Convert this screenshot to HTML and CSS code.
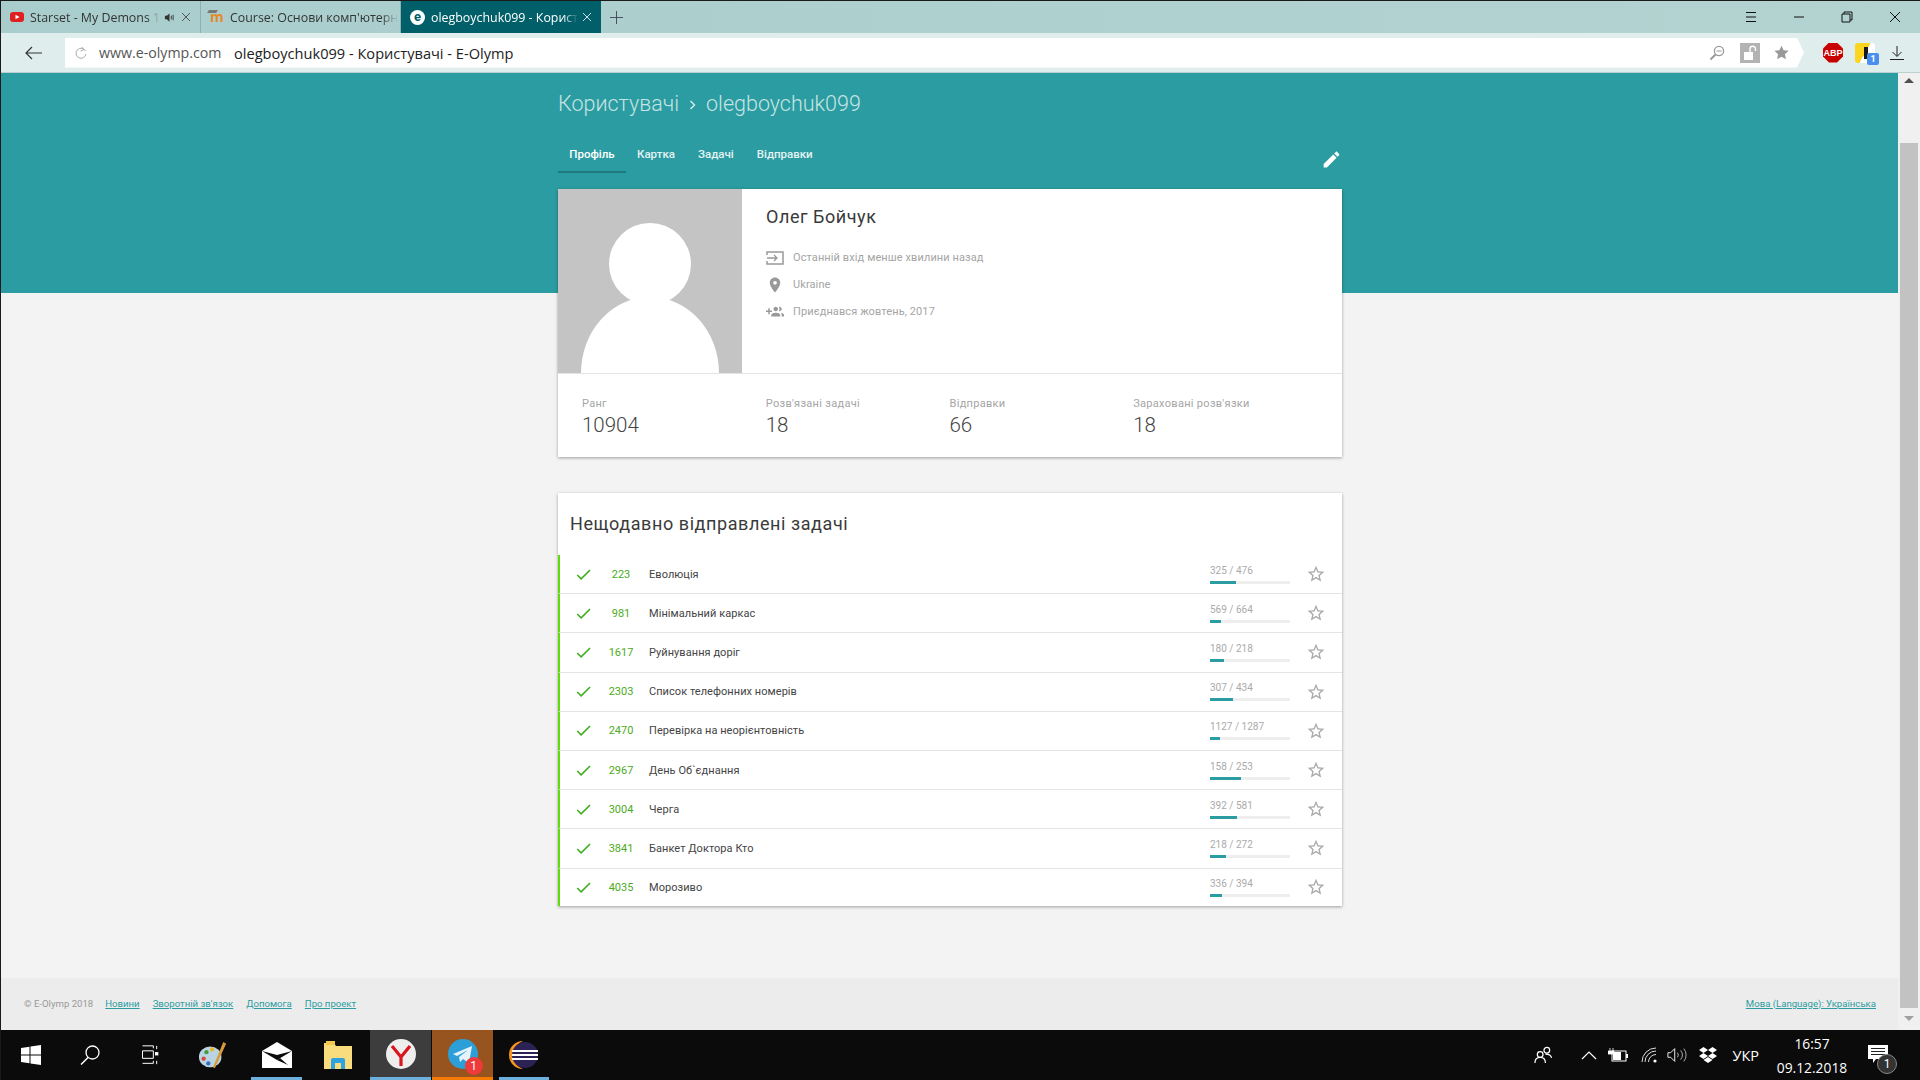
FILE: index.html
```html
<!DOCTYPE html>
<html lang="uk">
<head>
<meta charset="utf-8">
<title>olegboychuk099 - Користувачі - E-Olymp</title>
<link rel="stylesheet" href="styles.css">
</head>
<body>
<svg class="defs" width="0" height="0" aria-hidden="true">
  <symbol id="i-check" viewBox="0 0 24 24"><path d="M9 16.17L4.83 12l-1.42 1.41L9 19 21 7l-1.41-1.41z"/></symbol>
  <symbol id="i-star" viewBox="0 0 24 24"><path d="M22 9.24l-7.19-.62L12 2 9.19 8.63 2 9.24l5.46 4.73L5.82 21 12 17.27 18.18 21l-1.63-7.03L22 9.24zM12 15.4l-3.76 2.27 1-4.28-3.32-2.88 4.38-.38L12 6.1l1.71 4.04 4.38.38-3.32 2.88 1 4.28L12 15.4z"/></symbol>
</svg>
<div class="shell">
  <div class="tabbar">
    <div class="tab">
      <svg class="fav" viewBox="0 0 14 14"><rect y="2" width="14" height="10" rx="3" fill="#e02020"/><path d="M5.5 4.7v4.6L9.5 7z" fill="#fff"/></svg>
      <span class="tab-title tab-title-1">Starset - My Demons 1</span>
      <svg class="speaker" viewBox="0 0 12 12"><path d="M1 4h2l3-2.5v9L3 8H1z" fill="#333"/><path d="M8 4v4M10 3v6" stroke="#333"/></svg>
      <svg class="tab-x" viewBox="0 0 10 10"><path d="M1 1l8 8M9 1l-8 8" stroke="#555"/></svg>
    </div>
    <div class="tab">
      <span class="fav-m">m</span>
      <span class="tab-title">Course: Основи комп'ютерн</span>
    </div>
    <div class="tab tab-active">
      <span class="fav-e">e</span>
      <span class="tab-title">olegboychuk099 - Корист</span>
      <svg class="tab-x" viewBox="0 0 10 10"><path d="M1 1l8 8M9 1l-8 8" stroke="#cde"/></svg>
    </div>
    <svg class="plus" viewBox="0 0 14 14"><path d="M7 0v14M0 7h14" stroke="#445"/></svg>
    <div class="win-ctrls">
      <svg viewBox="0 0 12 12"><path d="M1 1.5h10M1 6h10M1 10.5h10" stroke="#111"/></svg>
      <svg viewBox="0 0 12 12"><path d="M1 6h10" stroke="#111"/></svg>
      <svg viewBox="0 0 12 12"><path d="M3 3V1h8v8H9M1 3h8v8H1z" fill="none" stroke="#111"/></svg>
      <svg viewBox="0 0 12 12"><path d="M1 1l10 10M11 1L1 11" stroke="#111"/></svg>
    </div>
  </div>
  <div class="addrbar">
    <svg class="back" viewBox="0 0 18 14"><path d="M1 7h16M7 1L1 7l6 6" fill="none" stroke="#333" stroke-width="1.2"/></svg>
    <div class="omnibox">
      <svg class="reload" viewBox="0 0 14 14"><path d="M11.5 5A5 5 0 1 0 12 8M8 1l1.5 3L6.5 5" fill="none" stroke="#aaa"/></svg>
      <span class="domain">www.e-olymp.com</span>
      <span class="page-title">olegboychuk099 - Користувачі - E-Olymp</span>
      <svg class="omni-search" viewBox="0 0 16 16"><circle cx="10" cy="6" r="4.6" fill="none" stroke="#999" stroke-width="1.3"/><path d="M7.5 6h5" stroke="#999"/><path d="M6.5 9.5L1.5 14.5" stroke="#999" stroke-width="2"/></svg>
      <span class="omni-lock"><svg viewBox="0 0 20 20"><rect x="4" y="9" width="9" height="8" fill="#fff"/><path d="M10 9V6a2.500 2.500 0 0 1 5.500 0v2" fill="none" stroke="#fff" stroke-width="1.400"/></svg></span>
      <svg class="omni-star" viewBox="0 0 24 24"><path d="M12 1l3.400 7.400 8 .9-5.900 5.500 1.600 8L12 18.800 4.900 22.800l1.600-8L.6 9.300l8-.9z" fill="#999"/></svg>
    </div>
    <div class="ext-abp"><span>ABP</span></div>
    <div class="ext-y"><span class="ext-badge">1</span></div>
    <svg class="dl" viewBox="0 0 14 14"><path d="M7 0v10M2.500 6L7 10.500 11.500 6M0 13.500h14" fill="none" stroke="#222"/></svg>
  </div>

  <div class="viewport">
    <div class="page">
      <div class="hero">
        <div class="wrap">
          <h1 class="crumbs"><span>Користувачі</span><svg class="crumb-sep" viewBox="0 0 8 12"><path d="M1.500 2l4 4-4 4" fill="none" stroke="#cfe9e8" stroke-width="1.500"/></svg><span>olegboychuk099</span></h1>
          <div class="tabs">
            <a class="ptab ptab-active">Профіль</a>
            <a class="ptab">Картка</a>
            <a class="ptab">Задачі</a>
            <a class="ptab">Відправки</a>
            <svg class="edit" viewBox="0 0 24 24"><path d="M3 17.250V21h3.750L17.810 9.940l-3.750-3.750L3 17.250zM20.710 7.040c.39-.39.39-1.020 0-1.410l-2.340-2.340c-.39-.39-1.020-.39-1.410 0l-1.830 1.830 3.750 3.750 1.830-1.830z"/></svg>
          </div>
        </div>
      </div>
      <main class="content wrap">
        <section class="card">
          <div class="profile">
            <svg class="avatar" viewBox="0 0 184 184"><rect width="184" height="184" fill="#c4c4c4"/><ellipse cx="92" cy="184" rx="69" ry="76" fill="#fff"/><circle cx="92" cy="75" r="41" fill="#fff"/></svg>
            <div class="about">
              <h2 class="name">Олег Бойчук</h2>
              <div class="info"><svg class="info-i" viewBox="0 0 18 14"><path d="M1 4V1h16v12H1v-3" fill="none" stroke="#999" stroke-width="1.500"/><path d="M1 7h10M8 4l3 3-3 3" fill="none" stroke="#999" stroke-width="1.300"/></svg><span>Останній вхід менше хвилини назад</span></div>
              <div class="info"><svg class="info-i" viewBox="0 0 24 24"><path d="M12 2C8.130 2 5 5.130 5 9c0 5.250 7 13 7 13s7-7.750 7-13c0-3.870-3.130-7-7-7zm0 9.500c-1.380 0-2.500-1.120-2.500-2.500s1.120-2.500 2.500-2.500 2.500 1.120 2.500 2.500-1.120 2.500-2.500 2.500z" fill="#999"/></svg><span>Ukraine</span></div>
              <div class="info"><svg class="info-i" viewBox="0 0 24 24"><path d="M8 10H5V7H3v3H0v2h3v3h2v-3h3v-2zm10 1c1.660 0 2.990-1.340 2.990-3S19.660 5 18 5c-.32 0-.63.05-.91.14.57.81.9 1.790.9 2.860s-.34 2.040-.9 2.860c.28.09.59.14.91.14zm-5 0c1.660 0 2.990-1.340 2.990-3S14.660 5 13 5s-3 1.340-3 3 1.340 3 3 3zm6.620 2.160c.83.73 1.380 1.660 1.380 2.840v2h3v-2c0-1.540-2.370-2.490-4.380-2.840zM13 13c-2 0-6 1-6 3v2h12v-2c0-2-4-3-6-3z" fill="#999"/></svg><span>Приєднався жовтень, 2017</span></div>
            </div>
          </div>
          <div class="stats">
            <div class="stat"><div class="stat-label">Ранг</div><div class="stat-value">10904</div></div>
            <div class="stat"><div class="stat-label">Розв'язані задачі</div><div class="stat-value">18</div></div>
            <div class="stat"><div class="stat-label">Відправки</div><div class="stat-value">66</div></div>
            <div class="stat"><div class="stat-label">Зараховані розв'язки</div><div class="stat-value">18</div></div>
          </div>
        </section>

        <section class="card card-recent">
          <h2 class="recent-title">Нещодавно відправлені задачі</h2>
          <div class="row"><svg class="check"><use href="#i-check"/></svg><span class="num">223</span><span class="pname">Еволюція</span><div class="meter"><span class="count">325 / 476</span><div class="bar"><div class="fill" style="width:26px"></div></div></div><svg class="star"><use href="#i-star"/></svg></div>
          <div class="row"><svg class="check"><use href="#i-check"/></svg><span class="num">981</span><span class="pname">Мінімальний каркас</span><div class="meter"><span class="count">569 / 664</span><div class="bar"><div class="fill" style="width:11px"></div></div></div><svg class="star"><use href="#i-star"/></svg></div>
          <div class="row"><svg class="check"><use href="#i-check"/></svg><span class="num">1617</span><span class="pname">Руйнування доріг</span><div class="meter"><span class="count">180 / 218</span><div class="bar"><div class="fill" style="width:14px"></div></div></div><svg class="star"><use href="#i-star"/></svg></div>
          <div class="row"><svg class="check"><use href="#i-check"/></svg><span class="num">2303</span><span class="pname">Список телефонних номерів</span><div class="meter"><span class="count">307 / 434</span><div class="bar"><div class="fill" style="width:23px"></div></div></div><svg class="star"><use href="#i-star"/></svg></div>
          <div class="row"><svg class="check"><use href="#i-check"/></svg><span class="num">2470</span><span class="pname">Перевірка на неорієнтовність</span><div class="meter"><span class="count">1127 / 1287</span><div class="bar"><div class="fill" style="width:10px"></div></div></div><svg class="star"><use href="#i-star"/></svg></div>
          <div class="row"><svg class="check"><use href="#i-check"/></svg><span class="num">2967</span><span class="pname">День Об`єднання</span><div class="meter"><span class="count">158 / 253</span><div class="bar"><div class="fill" style="width:31px"></div></div></div><svg class="star"><use href="#i-star"/></svg></div>
          <div class="row"><svg class="check"><use href="#i-check"/></svg><span class="num">3004</span><span class="pname">Черга</span><div class="meter"><span class="count">392 / 581</span><div class="bar"><div class="fill" style="width:27px"></div></div></div><svg class="star"><use href="#i-star"/></svg></div>
          <div class="row"><svg class="check"><use href="#i-check"/></svg><span class="num">3841</span><span class="pname">Банкет Доктора Кто</span><div class="meter"><span class="count">218 / 272</span><div class="bar"><div class="fill" style="width:16px"></div></div></div><svg class="star"><use href="#i-star"/></svg></div>
          <div class="row"><svg class="check"><use href="#i-check"/></svg><span class="num">4035</span><span class="pname">Морозиво</span><div class="meter"><span class="count">336 / 394</span><div class="bar"><div class="fill" style="width:12px"></div></div></div><svg class="star"><use href="#i-star"/></svg></div>
        </section>
      </main>
      <footer class="footer">
        <span class="copy">© E-Olymp 2018</span>
        <a class="flink">Новини</a>
        <a class="flink">Зворотній зв'язок</a>
        <a class="flink">Допомога</a>
        <a class="flink">Про проект</a>
        <a class="flink flink-lang">Мова (Language): Українська</a>
      </footer>
    </div>
    <div class="scrollbar">
      <span class="sb-up"></span>
      <span class="sb-thumb"></span>
      <span class="sb-down"></span>
    </div>
  </div>

  <div class="taskbar">
    <div class="slot slot-win"><svg class="ti" viewBox="0 0 20 20"><path d="M0 3l8.500-1.200v7.600H0zM9.500 1.600L20 0v9.400H9.500zM0 10.400h8.500v7.800L0 17zM9.500 10.400H20V20L9.500 18.400z" fill="#fff"/></svg></div>
    <div class="slot"><svg class="ti" viewBox="0 0 20 20"><circle cx="12.500" cy="7.500" r="6.500" fill="none" stroke="#fff" stroke-width="1.300"/><path d="M8 12.500L1 19.500" stroke="#fff" stroke-width="1.500"/></svg></div>
    <div class="slot"><svg class="ti" viewBox="0 0 20 24"><path d="M1 1h13M1 7h13v9H1zM1 22h13M14 1v3M1 19v0M14 19v3M18 1v4M18 19v4" fill="none" stroke="#fff" stroke-width="1.200"/><rect x="16" y="8.500" width="4" height="4" fill="#fff"/></svg></div>
    <div class="slot slot-paint"><svg class="ti-l" viewBox="0 0 32 32"><ellipse cx="13" cy="18" rx="12" ry="11" fill="#b9d5e4"/><circle cx="9" cy="13" r="2.300" fill="#4a9a3a"/><circle cx="15" cy="10" r="2.300" fill="#e8b62a"/><circle cx="6" cy="20" r="2.300" fill="#d84a3a"/><circle cx="11" cy="25" r="2.300" fill="#3a6ec0"/><path d="M27 2l3 2-12 26-2-1z" fill="#d99a3a"/></svg></div>
    <div class="slot slot-app slot-mail"><svg class="ti-l" viewBox="0 0 30 26"><path d="M0 9L15 0l15 9v17H0z" fill="#fff"/><path d="M0 9l15 9 15-9-15 4z" fill="#0a0a0a"/><path d="M15 18l11 5-8-7z" fill="#0a0a0a"/></svg></div>
    <div class="slot"><svg class="ti-l" viewBox="0 0 30 28"><path d="M1 2h10l2 3h16v23H1z" fill="#f9dc7e"/><rect x="3" y="0" width="9" height="4" fill="#f2c94c"/><path d="M8 28v-9a2 2 0 0 1 2-2h10a2 2 0 0 1 2 2v9h-4v-6h-6v6z" fill="#2ea3dd"/></svg></div>
    <div class="slot slot-ya"><svg class="ti-xl" viewBox="0 0 30 30"><circle cx="15" cy="15" r="15" fill="#eee"/><path d="M6 7l9 11v9M24 7l-9 11" fill="none" stroke="#d9161c" stroke-width="3.200"/></svg></div>
    <div class="slot slot-tg"><span class="tg-wrap"><svg class="ti-xl" viewBox="0 0 30 30"><circle cx="15" cy="15" r="15" fill="#2c9fd8"/><path d="M5 15l19-8-3 17-6-4-3 3-1-5 9-7-11 6z" fill="#e6f3fa"/></svg><span class="tg-badge">1</span></span></div>
    <div class="slot slot-app"><svg class="ti-l" viewBox="0 0 30 30"><path d="M14 1A14 14 0 0 0 14 29 15 15 0 0 1 14 1z" fill="#f7941e"/><circle cx="16" cy="15" r="13" fill="#2c2255"/><path d="M3 11h26M3 15h26M3 19h26" stroke="#fff" stroke-width="1.800"/></svg></div>
    <div class="tray">
      <svg class="tr tr-people" viewBox="0 0 20 20"><circle cx="13.500" cy="4.500" r="3" fill="none" stroke="#fff" stroke-width="1.300"/><circle cx="6.500" cy="9" r="3" fill="none" stroke="#fff" stroke-width="1.300"/><path d="M1 18c0-4 2-6 5.500-6s5.500 2 5.500 6M12 8.500c4 0 6 1.500 6.500 4" fill="none" stroke="#fff" stroke-width="1.300"/></svg>
      <svg class="tr tr-chev" viewBox="0 0 16 10"><path d="M1 9l7-7 7 7" fill="none" stroke="#fff" stroke-width="1.200"/></svg>
      <svg class="tr tr-batt" viewBox="0 0 20 14"><rect x="4" y="3" width="14" height="10" fill="none" stroke="#fff"/><rect x="5" y="4" width="8" height="8" fill="#fff"/><rect x="18" y="6" width="2" height="4" fill="#fff"/><path d="M2 0v3M5 0v3M0 3h6v3H0z" stroke="#fff" fill="#fff" stroke-width=".8"/></svg>
      <svg class="tr tr-wifi" viewBox="0 0 16 16"><path d="M1 15A14 14 0 0 1 15 1M4 15A11 11 0 0 1 15 4M7.500 15A7.500 7.500 0 0 1 15 7.500" fill="none" stroke="#ddd"/><circle cx="14" cy="14" r="1.600" fill="#fff"/></svg>
      <svg class="tr tr-vol" viewBox="0 0 22 16"><path d="M1 5.500h3L8.500 1v14L4 10.500H1z" fill="none" stroke="#fff"/><path d="M11.500 5.500a4 4 0 0 1 0 5M15 3a8 8 0 0 1 0 10M18.500 1a11 11 0 0 1 0 14" fill="none" stroke="#bbb"/></svg>
      <svg class="tr tr-drop" viewBox="0 0 18 16"><path d="M4.500 0L9 3 4.500 6 0 3zM13.500 0L18 3l-4.500 3L9 3zM4.500 6L9 9l-4.500 3L0 9zM13.500 6L18 9l-4.500 3L9 9zM4.500 13L9 10l4.500 3L9 16z" fill="#fff"/></svg>
      <span class="lang">УКР</span>
      <div class="clock"><span>16:57</span><span>09.12.2018</span></div>
      <div class="notif">
        <svg class="notif-i" viewBox="0 0 20 18"><path d="M0 0h20v14H8l-3 4v-4H0z" fill="#fff"/><path d="M3 3.500h14M3 6.500h14M3 9.500h14" stroke="#222"/></svg>
        <span class="notif-badge">1</span>
      </div>
    </div>
  </div>
</div>
</body>
</html>
```

FILE: styles.css
```css
* { box-sizing: border-box; }
html, body { margin: 0; height: 100%; overflow: hidden; }
body { font-family: Roboto, "Noto Sans", sans-serif; background: #111; }
h1, h2 { margin: 0; font-weight: 400; }
svg { display: block; flex: none; }
.defs { position: absolute; }

.shell { width: 1920px; height: 1080px; display: flex; flex-direction: column; border-left: 1px solid #1a1a1a; border-top: 1px solid #1a1a1a; }

/* browser tab strip */
.tabbar { height: 32px; display: flex; align-items: stretch; background: linear-gradient(90deg, #a9cdcd, #b3d3d1); font-family: "Open Sans", sans-serif; font-size: 12.4px; color: #333; flex: none; }
.tab { width: 200px; display: flex; align-items: center; padding-left: 9px; border-right: 1px solid #8fb0b0; overflow: hidden; }
.tab-active { background: #005f68; color: #fff; border-right: 0; }
.fav { width: 14px; height: 14px; margin-right: 6px; }
.fav-m { position: relative; width: 17px; margin-right: 3px; font-weight: 700; font-size: 14px; color: #e58a2a; line-height: 1; }
.fav-m::before { content: ""; position: absolute; left: -2px; top: 0; width: 9px; height: 3px; background: #777; transform: skewX(-30deg); }
.fav-e { width: 15px; height: 15px; border-radius: 50%; background: #fff; color: #005f68; margin-right: 6px; font: 700 13px/14px Roboto, sans-serif; text-align: center; }
.tab-title { white-space: nowrap; -webkit-mask-image: linear-gradient(90deg, #000 90%, transparent); mask-image: linear-gradient(90deg, #000 90%, transparent); }
.speaker { width: 11px; height: 11px; margin-left: 4px; }
.tab-x { width: 10px; height: 10px; margin-left: auto; margin-right: 9px; }
.plus { width: 13px; height: 13px; margin: auto 0 auto 9px; }
.win-ctrls { margin-left: auto; display: flex; align-items: center; padding-right: 19px; gap: 36px; }
.win-ctrls svg { width: 12px; height: 12px; }

/* address bar */
.addrbar { height: 40px; flex: none; display: flex; align-items: center; background: #e0eded; border-bottom: 1px solid #bcd0d0; position: relative; }
.back { width: 18px; height: 14px; margin: 0 22px 0 24px; }
.omnibox { width: 1739px; height: 30px; background: #fff; display: flex; align-items: center; padding-left: 9px; clip-path: polygon(0 0, 1732px 0, 100% 50%, 1732px 100%, 0 100%); font-family: "Open Sans", sans-serif; font-size: 14px; white-space: nowrap; }
.reload { width: 14px; height: 14px; margin-right: 11px; }
.domain { color: #555; font-size: 14.200px; width: 135px; }
.page-title { color: #222; font-size: 14.600px; }
.omni-search { width: 16px; height: 16px; margin-left: auto; }
.omni-lock { width: 20px; height: 20px; background: #b3b3b3; margin-left: 15px; }
.omni-star { width: 15px; height: 15px; margin-left: 14px; margin-right: 15px; }
.ext-abp { width: 20px; height: 20px; margin-left: 19px; background: #c90000; clip-path: polygon(30% 0, 70% 0, 100% 30%, 100% 70%, 70% 100%, 30% 100%, 0 70%, 0 30%); color: #fff; font: 700 9px/20px "Liberation Sans", sans-serif; text-align: center; }
.ext-y { width: 20px; height: 20px; margin-left: 12px; background: linear-gradient(120deg, #fbd51f 50%, #fff 50%); border-radius: 3px; position: relative; }
.ext-y::before { content: ""; position: absolute; left: 9px; top: 4px; width: 4px; height: 12px; background: #1a1a1a; }
.ext-badge { position: absolute; right: -4px; bottom: -2px; width: 12px; height: 12px; border-radius: 2px; background: #4a8ff0; color: #fff; font: 700 9px/12px Roboto, sans-serif; text-align: center; }
.dl { width: 14px; height: 14px; margin-left: 15px; }

/* page */
.viewport { flex: 1; min-height: 0; display: flex; }
.page { flex: 1; min-width: 0; background: #f3f3f3; display: flex; flex-direction: column; }
.wrap { width: 784px; margin-left: 557px; }
.hero { height: 220px; flex: none; background: #2b9ca1; }
.crumbs { height: 62px; padding-top: 15px; display: flex; align-items: flex-start; font-size: 21.500px; font-weight: 300; line-height: 32px; color: #c6e4e3; }
.crumb-sep { width: 8px; height: 12px; margin: 11px 9px 0 10px; }
.tabs { display: flex; align-items: stretch; height: 38px; }
.ptab { display: block; padding: 11px 12px 0 11px; font-size: 11.500px; font-weight: 500; color: #e4f3f3; line-height: 16px; }
.ptab-active { width: 68px; color: #fff; text-align: center; padding-left: 0; padding-right: 0; border-bottom: 2px solid #1f7a80; }
.edit { width: 21px; height: 21px; margin: 14px 0 0 auto; fill: #fff; }

.content { flex: 1; margin-top: -104px; position: relative; }
.card { background: #fff; box-shadow: 0 1px 3px rgba(0,0,0,.35); margin-bottom: 36px; }
.profile { display: flex; height: 185px; border-bottom: 1px solid #e4e4e4; }
.avatar { width: 184px; height: 184px; }
.about { padding: 17px 0 0 24px; }
.name { font-size: 18px; line-height: 22px; color: #3a3a3a; letter-spacing: .55px; margin-bottom: 16px; }
.info { display: flex; align-items: center; height: 27px; font-size: 11px; color: #a5a5a5; letter-spacing: .1px; }
.info-i { width: 18px; height: 18px; margin-right: 9px; }
.stats { display: grid; grid-template-columns: repeat(4, 1fr); padding: 23px 25px 18px 24px; height: 83px; }
.stat-label { font-size: 11px; line-height: 14px; color: #a5a5a5; letter-spacing: .3px; }
.stat-value { font-size: 20.500px; line-height: 28px; font-weight: 300; color: #444; }

.card-recent { margin-bottom: 0; }
.recent-title { height: 62px; padding: 19px 0 0 12px; font-size: 18px; line-height: 24px; color: #3a3a3a; letter-spacing: .58px; }
.row { height: 39.200px; display: flex; align-items: center; border-left: 2px solid #5fdc0a; border-bottom: 1px solid #e4e4e4; font-size: 11px; padding: 0 16px 0 14px; }
.row:last-child { border-bottom: 0; height: 37.500px; }
.check { width: 19px; height: 19px; fill: #3fae1c; }
.num { width: 50px; text-align: center; color: #4cab22; margin-left: 3px; }
.pname { flex: 1; color: #444; letter-spacing: .05px; margin-left: 3px; }
.meter { width: 80px; display: flex; flex-direction: column; }
.count { font-size: 10px; line-height: 12px; color: #aaa; margin-bottom: 4px; }
.bar { height: 3px; background: #eee; }
.fill { height: 3px; background: #2b9ca1; }
.star { width: 20px; height: 20px; margin-left: 16px; fill: #aaa; }

.footer { height: 52px; flex: none; background: #ececec; display: flex; align-items: center; padding: 0 22px 2px 23px; font-size: 9.600px; }
.copy { color: #999; margin-right: 12px; }
.flink { color: #2b9ca1; text-decoration: underline; margin-right: 13px; }
.flink-lang { margin: 0 0 0 auto; }

.scrollbar { width: 22px; flex: none; background: #f0f0f0; display: flex; flex-direction: column; align-items: center; padding-top: 5px; }
.sb-up { width: 0; height: 0; border: 5px solid transparent; border-top: 0; border-bottom: 5px solid #505050; }
.sb-thumb { width: 18px; height: 865px; background: #c2c2c2; margin-top: 60px; }
.sb-down { width: 0; height: 0; border: 5px solid transparent; border-bottom: 0; border-top: 5px solid #a0a0a0; margin-top: 8px; }

/* taskbar */
.taskbar { height: 50px; flex: none; background: #0b0b0b; display: flex; align-items: center; color: #fff; }
.slot { width: 60px; height: 50px; display: flex; align-items: center; justify-content: center; }
.slot-win { width: 59px; }
.slot-paint { width: 65px; }
.slot-app { width: 62px; position: relative; }
.slot-mail { width: 63px; }
.slot-app::after { content: ""; position: absolute; left: 6px; right: 6px; bottom: 0; height: 3px; background: #6cb0de; }
.slot-ya { width: 61px; margin-left: 2px; background: #3d3d3d; border-bottom: 3px solid #6cb0de; margin-right: 1px; }
.slot-tg { width: 61px; background: #98541e; border-bottom: 3px solid #f57c00; }
.ti { width: 20px; height: 20px; }
.ti-l { width: 30px; height: 30px; }
.ti-xl { width: 30px; height: 30px; }
.tg-wrap { position: relative; display: block; }
.tg-badge { position: absolute; right: -5px; bottom: -6px; width: 18px; height: 18px; border-radius: 50%; background: #ee3a3a; color: #fff; font-size: 12px; line-height: 18px; text-align: center; }

.tray { margin-left: auto; display: flex; align-items: center; height: 50px; padding-right: 32px; }
.tr-people { width: 19px; height: 19px; margin-right: 28px; }
.tr-chev { width: 16px; height: 10px; margin-right: 11px; }
.tr-batt { width: 20px; height: 14px; margin-right: 13px; }
.tr-wifi { width: 16px; height: 16px; margin-right: 10px; }
.tr-vol { width: 20px; height: 16px; margin-right: 12px; }
.tr-drop { width: 18px; height: 16px; margin-right: 15px; }
.lang { font-family: "Open Sans", sans-serif; font-size: 14.500px; margin-right: 17px; }
.clock { display: flex; flex-direction: column; align-items: center; font-family: "Open Sans", sans-serif; font-size: 13.800px; line-height: 24px; width: 72px; padding-top: 1px; }
.notif { position: relative; margin-left: 20px; width: 20px; height: 20px; }
.notif-i { width: 20px; height: 18px; }
.notif-badge { position: absolute; left: 9px; top: 9px; width: 20px; height: 20px; border-radius: 50%; background: #333; border: 1px solid #888; font-size: 12px; line-height: 18px; text-align: center; }
```
